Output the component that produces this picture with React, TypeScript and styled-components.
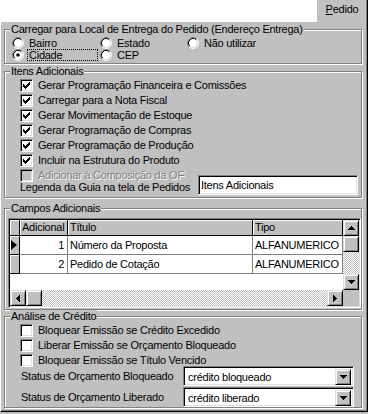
import React from 'react';
import styled, { createGlobalStyle, css } from 'styled-components';

const FACE = '#c0c0c0';
const SHADOW = '#808080';
const LIGHT = '#dfdfdf';

const GlobalStyle = createGlobalStyle`
  html, body { margin: 0; padding: 0; background: #ffffff; }
  body {
    font-family: "Liberation Sans", Arial, sans-serif;
    font-size: 11px;
    letter-spacing: -0.25px;
    color: #000;
  }
  * { box-sizing: border-box; }
`;

const raised = css`
  background: ${FACE};
  border: 1px solid;
  border-color: ${LIGHT} #000 #000 ${LIGHT};
  box-shadow: inset 1px 1px 0 #fff, inset -1px -1px 0 ${SHADOW};
`;

const sunken = css`
  border: 1px solid;
  border-color: ${SHADOW} #fff #fff ${SHADOW};
  box-shadow: inset 1px 1px 0 #000, inset -1px -1px 0 ${LIGHT};
`;

const Window = styled.div`
  width: 368px;
  height: 414px;
  background: ${FACE};
  display: flex;
  flex-direction: column;
  overflow: hidden;
`;

const TabStrip = styled.div`
  height: 21px;
  background: #fff;
  display: flex;
  justify-content: flex-end;
  flex: none;
`;

const Tab = styled.div`
  width: 52px;
  height: 22px;
  margin-bottom: -1px;
  position: relative;
  z-index: 1;
  background: ${FACE};
  border-left: 1px solid #fff;
  border-right: 1px solid #000;
  box-shadow: inset -1px 0 0 ${SHADOW};
  padding-top: 3px;
  line-height: 13px;
  text-align: center;
`;

const Panel = styled.div`
  flex: none;
  height: 391px;
  background: ${FACE};
  border-top: 1px solid #fff;
  border-left: 1px solid #fff;
  border-right: 1px solid #000;
  border-bottom: 1px solid #000;
  box-shadow: inset -1px -1px 0 ${SHADOW};
  padding: 7px 5px 3px 3px;
  display: flex;
  flex-direction: column;
`;

const Group = styled.div<{ $h: number; $mt: number }>`
  position: relative;
  flex: none;
  height: ${(p) => p.$h}px;
  margin-top: ${(p) => p.$mt}px;
  border: 1px solid ${SHADOW};
  box-shadow: inset 1px 1px 0 #fff, 1px 1px 0 #fff;
`;

const Legend = styled.span`
  position: absolute;
  top: -7px;
  left: 5px;
  padding: 0 1px;
  background: ${FACE};
  line-height: 13px;
  white-space: nowrap;
`;

/* ---------- radios ---------- */
const RadioGrid = styled.div`
  display: grid;
  grid-template-columns: 88px 87px 1fr;
  grid-auto-rows: 12px;
  padding: 7px 0 0 7px;
`;

const RadioItem = styled.div`
  display: flex;
  align-items: center;
  height: 12px;
`;

const RadioLabel = styled.span<{ $focused?: boolean }>`
  margin-left: 3px;
  height: 12px;
  line-height: 10px;
  padding: 0 1px;
  border: 1px dotted ${(p) => (p.$focused ? '#000' : 'transparent')};
  width: ${(p) => (p.$focused ? '71px' : 'auto')};
  white-space: nowrap;
`;

const RadioIcon = ({ checked }: { checked?: boolean }) => (
  <svg width="12" height="12" viewBox="0 0 12 12" style={{ flex: 'none' }}>
    <circle cx="6" cy="6" r="4.5" fill="#fff" />
    <path d="M2.11 9.89 A5.5 5.5 0 0 1 9.89 2.11" fill="none" stroke={SHADOW} />
    <path d="M9.89 2.11 A5.5 5.5 0 0 1 2.11 9.89" fill="none" stroke="#fff" />
    <path d="M2.82 9.18 A4.5 4.5 0 0 1 9.18 2.82" fill="none" stroke="#000" />
    <path d="M9.18 2.82 A4.5 4.5 0 0 1 2.82 9.18" fill="none" stroke={LIGHT} />
    {checked && <circle cx="6" cy="6" r="1.8" fill="#000" />}
  </svg>
);

const Radio = ({ label, checked, focused }: { label: string; checked?: boolean; focused?: boolean }) => (
  <RadioItem>
    <RadioIcon checked={checked} />
    <RadioLabel $focused={focused}>{label}</RadioLabel>
  </RadioItem>
);

/* ---------- checkboxes ---------- */
const CheckList = styled.div`
  display: flex;
  flex-direction: column;
  padding: 6px 0 0 15px;
`;

const CheckRow = styled.div`
  display: flex;
  align-items: center;
  height: 15px;
`;

const Box = styled.span<{ $disabled?: boolean }>`
  ${sunken};
  flex: none;
  width: 13px;
  height: 13px;
  padding: 2px;
  display: flex;
  background: ${(p) => (p.$disabled ? FACE : '#fff')};
`;

const CheckText = styled.span<{ $disabled?: boolean }>`
  margin-left: 5px;
  line-height: 15px;
  white-space: nowrap;
  color: ${(p) => (p.$disabled ? SHADOW : '#000')};
  text-shadow: ${(p) => (p.$disabled ? '1px 1px 0 #fff' : 'none')};
`;

const CheckGlyph = () => (
  <svg width="7" height="7" viewBox="0 0 7 7" shapeRendering="crispEdges">
    {[2, 3, 4, 3, 2, 1, 0].map((y, x) => (
      <rect key={x} x={x} y={y} width="1" height="3" fill="#000" />
    ))}
  </svg>
);

const Check = ({ label, checked, disabled }: { label: string; checked?: boolean; disabled?: boolean }) => (
  <CheckRow>
    <Box $disabled={disabled}>{checked && <CheckGlyph />}</Box>
    <CheckText $disabled={disabled}>{label}</CheckText>
  </CheckRow>
);

const LegendaRow = styled.div`
  display: flex;
  align-items: flex-end;
  height: 20px;
  margin-top: -8px;
`;

const FieldLabel = styled.span<{ $w: number }>`
  width: ${(p) => p.$w}px;
  flex: none;
  line-height: 15px;
  white-space: nowrap;
`;

const TextBox = styled.div`
  ${sunken};
  width: 160px;
  height: 20px;
  background: #fff;
  padding: 1px 2px;
  line-height: 16px;
  white-space: nowrap;
`;

/* ---------- grid ---------- */
const GridFrame = styled.div`
  ${sunken};
  margin: 9px 0 0 3px;
  width: 353px;
  height: 90px;
  padding: 1px;
  background: #fff;
  display: grid;
  grid-template-columns: 1fr 16px;
  grid-template-rows: 1fr 16px;
`;

const Table = styled.div`
  display: grid;
  grid-template-columns: 10px 48px 185px 90px;
  grid-template-rows: 16px 19px 19px;
  align-content: start;
  background: #fff;
  overflow: hidden;
`;

const fixedCell = css`
  background: ${FACE};
  border-right: 1px solid #000;
  border-bottom: 1px solid #000;
  box-shadow: inset 1px 1px 0 #fff;
`;

const HeadCell = styled.div`
  ${fixedCell};
  padding-left: 2px;
  line-height: 15px;
  white-space: nowrap;
  overflow: hidden;
`;

const IndicatorCell = styled.div`
  ${fixedCell};
  display: flex;
  align-items: center;
  padding-left: 1px;
`;

const DataCell = styled.div<{ $right?: boolean }>`
  background: #fff;
  border-right: 1px solid ${SHADOW};
  border-bottom: 1px solid ${SHADOW};
  padding: 0 ${(p) => (p.$right ? '3px' : '2px')} 0 2px;
  text-align: ${(p) => (p.$right ? 'right' : 'left')};
  line-height: 18px;
  white-space: nowrap;
  overflow: hidden;
`;

const ScrollV = styled.div`
  display: flex;
  flex-direction: column;
`;

const ScrollH = styled.div`
  display: flex;
`;

const ScrollButton = styled.div`
  ${raised};
  flex: none;
  width: 16px;
  height: 16px;
  display: flex;
  align-items: center;
  justify-content: center;
`;

const Track = styled.div`
  flex: 1;
  background: repeating-conic-gradient(${FACE} 0% 25%, #fff 0% 50%) 0 0 / 2px 2px;
`;

const Corner = styled.div`
  background: ${FACE};
`;

type Dir = 'up' | 'down' | 'left' | 'right';
const Arrow = ({ dir }: { dir: Dir }) => {
  const rows = [1, 3, 5, 7];
  if (dir === 'up' || dir === 'down') {
    return (
      <svg width="7" height="4" viewBox="0 0 7 4" shapeRendering="crispEdges">
        {rows.map((w, i) => (
          <rect key={i} x={(7 - w) / 2} y={dir === 'up' ? i : 3 - i} width={w} height="1" fill="#000" />
        ))}
      </svg>
    );
  }
  return (
    <svg width="4" height="7" viewBox="0 0 4 7" shapeRendering="crispEdges">
      {rows.map((h, i) => (
        <rect key={i} y={(7 - h) / 2} x={dir === 'left' ? i : 3 - i} height={h} width="1" fill="#000" />
      ))}
    </svg>
  );
};

const Pointer = () => (
  <svg width="6" height="10" viewBox="0 0 6 10">
    <polygon points="0,0 6,5 0,10" fill="#000" />
  </svg>
);

/* ---------- combos ---------- */
const ComboList = styled.div`
  display: flex;
  flex-direction: column;
  gap: 1px;
  margin-top: -2px;
`;

const ComboRow = styled.div`
  display: flex;
  align-items: center;
  height: 20px;
  padding-left: 1px;
`;

const Combo = styled.div`
  ${sunken};
  width: 171px;
  height: 20px;
  background: #fff;
  padding: 2px;
  display: flex;
`;

const ComboText = styled.span`
  flex: 1;
  padding-left: 2px;
  line-height: 16px;
  white-space: nowrap;
`;

const ComboSelect = ({ value }: { value: string }) => (
  <Combo>
    <ComboText>{value}</ComboText>
    <ScrollButton>
      <Arrow dir="down" />
    </ScrollButton>
  </Combo>
);

export default function App() {
  return (
    <>
      <GlobalStyle />
      <Window>
        <TabStrip>
          <Tab>
            <u>P</u>edido
          </Tab>
        </TabStrip>
        <Panel>
          <Group $h={35} $mt={0}>
            <Legend>Carregar para Local de Entrega do Pedido (Endereço Entrega)</Legend>
            <RadioGrid>
              <Radio label="Bairro" />
              <Radio label="Estado" />
              <Radio label="Não utilizar" />
              <Radio label="Cidade" checked focused />
              <Radio label="CEP" />
            </RadioGrid>
          </Group>

          <Group $h={127} $mt={7}>
            <Legend>Itens Adicionais</Legend>
            <CheckList>
              <Check checked label="Gerar Programação Financeira e Comissões" />
              <Check checked label="Carregar para a Nota Fiscal" />
              <Check checked label="Gerar Movimentação de Estoque" />
              <Check checked label="Gerar Programação de Compras" />
              <Check checked label="Gerar Programação de Produção" />
              <Check checked label="Incluir na Estrutura do Produto" />
              <Check disabled label="Adicionar à Composição da OF" />
              <LegendaRow>
                <FieldLabel $w={178}>Legenda da Guia na tela de Pedidos</FieldLabel>
                <TextBox>Itens Adicionais</TextBox>
              </LegendaRow>
            </CheckList>
          </Group>

          <Group $h={102} $mt={10}>
            <Legend>Campos Adicionais</Legend>
            <GridFrame>
              <Table>
                <IndicatorCell />
                <HeadCell>Adicional</HeadCell>
                <HeadCell>Título</HeadCell>
                <HeadCell>Tipo</HeadCell>

                <IndicatorCell>
                  <Pointer />
                </IndicatorCell>
                <DataCell $right>1</DataCell>
                <DataCell>Número da Proposta</DataCell>
                <DataCell>ALFANUMERICO</DataCell>

                <IndicatorCell />
                <DataCell $right>2</DataCell>
                <DataCell>Pedido de Cotação</DataCell>
                <DataCell>ALFANUMERICO</DataCell>
              </Table>
              <ScrollV>
                <ScrollButton>
                  <Arrow dir="up" />
                </ScrollButton>
                <ScrollButton />
                <Track />
                <ScrollButton>
                  <Arrow dir="down" />
                </ScrollButton>
              </ScrollV>
              <ScrollH>
                <ScrollButton>
                  <Arrow dir="left" />
                </ScrollButton>
                <ScrollButton />
                <Track />
                <ScrollButton>
                  <Arrow dir="right" />
                </ScrollButton>
              </ScrollH>
              <Corner />
            </GridFrame>
          </Group>

          <Group $h={92} $mt={6}>
            <Legend>Análise de Crédito</Legend>
            <CheckList>
              <Check label="Bloquear Emissão se Crédito Excedido" />
              <Check label="Liberar Emissão se Orçamento Bloqueado" />
              <Check label="Bloquear Emissão se Título Vencido" />
              <ComboList>
                <ComboRow>
                  <FieldLabel $w={162}>Status de Orçamento Bloqueado</FieldLabel>
                  <ComboSelect value="crédito bloqueado" />
                </ComboRow>
                <ComboRow>
                  <FieldLabel $w={162}>Status de Orçamento Liberado</FieldLabel>
                  <ComboSelect value="crédito liberado" />
                </ComboRow>
              </ComboList>
            </CheckList>
          </Group>
        </Panel>
      </Window>
    </>
  );
}
